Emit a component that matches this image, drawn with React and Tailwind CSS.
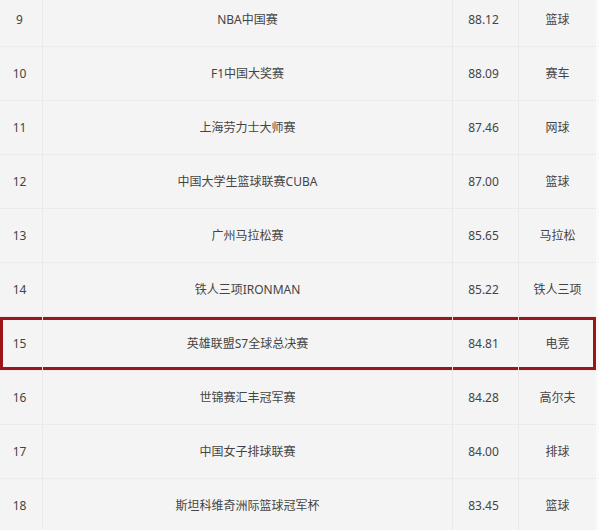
import React from 'react';

const rows = [
  { rank: 9, name: 'NBA中国赛', score: '88.12', type: '篮球' },
  { rank: 10, name: 'F1中国大奖赛', score: '88.09', type: '赛车' },
  { rank: 11, name: '上海劳力士大师赛', score: '87.46', type: '网球' },
  { rank: 12, name: '中国大学生篮球联赛CUBA', score: '87.00', type: '篮球' },
  { rank: 13, name: '广州马拉松赛', score: '85.65', type: '马拉松' },
  { rank: 14, name: '铁人三项IRONMAN', score: '85.22', type: '铁人三项' },
  { rank: 15, name: '英雄联盟S7全球总决赛', score: '84.81', type: '电竞', hot: true },
  { rank: 16, name: '世锦赛汇丰冠军赛', score: '84.28', type: '高尔夫' },
  { rank: 17, name: '中国女子排球联赛', score: '84.00', type: '排球' },
  { rank: 18, name: '斯坦科维奇洲际篮球冠军杯', score: '83.45', type: '篮球' },
];

const App = () => {
  return (
    <div className="w-[599px] h-[530px] overflow-hidden bg-[#fafafa] text-[12px] text-[#444]" style={{ fontFamily: '"Noto Sans", "Noto Sans CJK SC", sans-serif' }}>
      <div className="w-[596px] -mt-[7px] bg-[#f4f4f4]">
        {rows.map((r) => (
          <div
            key={r.rank}
            className={
              r.hot
                ? 'flex h-[54px] items-center border-b border-[#ebebeb] ring-[3px] ring-inset ring-[#9e1519]'
                : 'flex h-[54px] items-center border-b border-[#ebebeb]'
            }
          >
            <div className="w-[42px] h-full flex items-center justify-center pr-[3px]">{r.rank}</div>
            <div className="w-[410px] h-full flex items-center justify-center border-l border-[#e9e9e9]">{r.name}</div>
            <div className="w-[66px] h-full flex items-center justify-center border-l border-[#e9e9e9] pr-[4px]">{r.score}</div>
            <div className="w-[78px] h-full flex items-center justify-center border-l border-[#e9e9e9]">{r.type}</div>
          </div>
        ))}
      </div>
    </div>
  );
};

export default App;
